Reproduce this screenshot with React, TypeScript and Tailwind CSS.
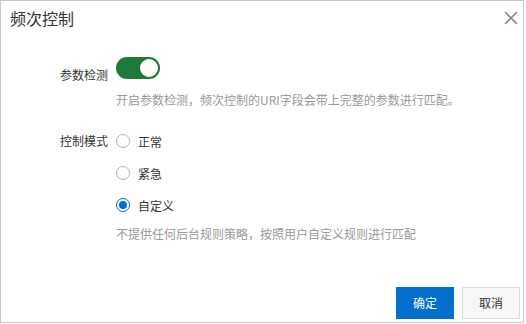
import React, { useState } from "react";

const font = { fontFamily: '"Microsoft YaHei", "Noto Sans CJK SC", "Noto Sans", sans-serif' };

function Radio({ checked, label, onClick }: { checked: boolean; label: string; onClick: () => void }) {
  return (
    <div className="flex items-center h-[20px] cursor-pointer" onClick={onClick}>
      <span
        className={
          checked
            ? "w-[14px] h-[14px] rounded-full border border-[#0070cc] flex items-center justify-center bg-white"
            : "w-[14px] h-[14px] rounded-full border border-[#b5b5b5] bg-white"
        }
      >
        {checked && <span className="w-[8px] h-[8px] rounded-full bg-[#0070cc]" />}
      </span>
      <span className="ml-[8px] text-[12px] text-[#333] leading-[17px]">{label}</span>
    </div>
  );
}

export default function App() {
  const [mode, setMode] = useState(2);
  const [on, setOn] = useState(true);
  return (
    <div className="w-[526px] h-[324px] bg-white" style={font}>
      <div className="w-[524px] h-[323px] border border-[#c8c8c8] flex flex-col">
        <div className="h-[33px] flex items-center justify-between pl-[9px] pr-[4px]">
          <span className="text-[16px] text-[#333] leading-[22px]">频次控制</span>
          <svg width="14" height="14" viewBox="0 0 14 14" className="mr-[1px]">
            <path d="M1 1 L13 13 M13 1 L1 13" stroke="#8a8a8a" strokeWidth="1.6" />
          </svg>
        </div>
        <div className="flex flex-col pl-[59px] pt-[23px]">
          <div className="flex items-start">
            <span className="w-[48px] mt-[9px] text-[12px] leading-[17px] text-[#333]">参数检测</span>
            <button
              onClick={() => setOn(!on)}
              className={
                on
                  ? "ml-[8px] w-[44px] h-[22px] rounded-full bg-[#1f7a3a] flex items-center justify-end px-[2px]"
                  : "ml-[8px] w-[44px] h-[22px] rounded-full bg-[#ccc] flex items-center justify-start px-[2px]"
              }
            >
              <span className="w-[18px] h-[18px] rounded-full bg-white" />
            </button>
          </div>
          <div className="ml-[56px] mt-[8px] text-[12px] leading-[17px] text-[#999] whitespace-nowrap">
            开启参数检测，频次控制的URI字段会带上完整的参数进行匹配。
          </div>
          <div className="flex items-start mt-[23px]">
            <span className="w-[48px] mt-[1px] text-[12px] leading-[17px] text-[#333]">控制模式</span>
            <div className="ml-[8px] flex flex-col gap-[12px]">
              <Radio checked={mode === 0} label="正常" onClick={() => setMode(0)} />
              <Radio checked={mode === 1} label="紧急" onClick={() => setMode(1)} />
              <Radio checked={mode === 2} label="自定义" onClick={() => setMode(2)} />
            </div>
          </div>
          <div className="ml-[56px] mt-[10px] text-[12px] leading-[17px] text-[#999] whitespace-nowrap">
            不提供任何后台规则策略，按照用户自定义规则进行匹配
          </div>
        </div>
        <div className="mt-auto flex justify-end gap-[8px] pr-[3px] pb-[3px]">
          <button className="w-[58px] h-[32px] bg-[#0070cc] text-white text-[12px]">确定</button>
          <button className="w-[58px] h-[32px] bg-[#f7f7f7] border border-[#dcdcdc] text-[#333] text-[12px]">取消</button>
        </div>
      </div>
    </div>
  );
}
